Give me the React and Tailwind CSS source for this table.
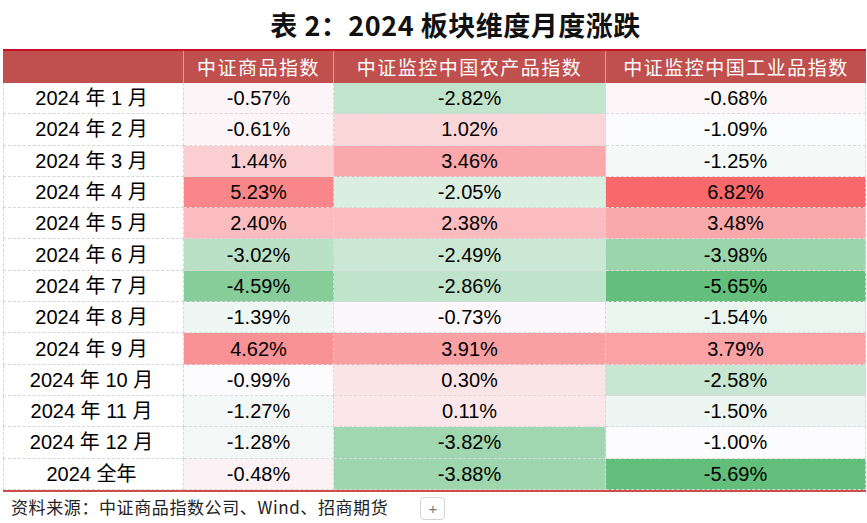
const rows = [
  ["2024 年 1 月", -0.57, -2.82, -0.68],
  ["2024 年 2 月", -0.61, 1.02, -1.09],
  ["2024 年 3 月", 1.44, 3.46, -1.25],
  ["2024 年 4 月", 5.23, -2.05, 6.82],
  ["2024 年 5 月", 2.4, 2.38, 3.48],
  ["2024 年 6 月", -3.02, -2.49, -3.98],
  ["2024 年 7 月", -4.59, -2.86, -5.65],
  ["2024 年 8 月", -1.39, -0.73, -1.54],
  ["2024 年 9 月", 4.62, 3.91, 3.79],
  ["2024 年 10 月", -0.99, 0.3, -2.58],
  ["2024 年 11 月", -1.27, 0.11, -1.5],
  ["2024 年 12 月", -1.28, -3.82, -1.0],
  ["2024 全年", -0.48, -3.88, -5.69],
];

// Excel 3-colour scale: min green, 50th percentile white, max red
const all = rows.flatMap((r) => r.slice(1)).sort((a, b) => a - b);
const min = all[0];
const max = all[all.length - 1];
const mid = all[Math.floor(all.length / 2)];
const green = [99, 190, 123];
const white = [252, 252, 255];
const red = [248, 105, 107];

function heat(v) {
  let from, to, t;
  if (v <= mid) {
    from = green;
    to = white;
    t = (v - min) / (mid - min);
  } else {
    from = white;
    to = red;
    t = (v - mid) / (max - mid);
  }
  const c = from.map((f, i) => Math.round(f + (to[i] - f) * t));
  return `rgb(${c[0]}, ${c[1]}, ${c[2]})`;
}

const cjk = "font-['Liberation_Sans','Noto_Sans_CJK_SC',sans-serif]";

export default function App() {
  return (
    <div className={`w-[867px] h-[523px] bg-white text-black ${cjk}`}>
      <div className="h-[49px] flex items-center justify-center pt-[2px] pl-[44px]">
        <h1 className="text-[27px] font-bold font-['Noto_Sans_CJK_SC',sans-serif] tracking-[0.5px] text-[#111]">
          表 2：2024 板块维度月度涨跌
        </h1>
      </div>

      <div className="ml-[3px] w-[863px] border-t-2 border-[#c8102e]">
        <div className="grid grid-cols-[181px_150px_272px_1fr] h-[32px] bg-[#c0504d] text-white text-[19px] tracking-[1.5px] font-['Noto_Sans_CJK_SC',sans-serif]">
          <div className="border-r border-[#d9d9d9]/60"></div>
          <div className="flex items-center justify-center border-r border-[#d9d9d9]/60">中证商品指数</div>
          <div className="flex items-center justify-center border-r border-[#d9d9d9]/60">中证监控中国农产品指数</div>
          <div className="flex items-center justify-center">中证监控中国工业品指数</div>
        </div>

        {rows.map(([label, a, b, c]) => (
          <div key={label} className="grid grid-cols-[181px_150px_272px_1fr] h-[31.3px] text-[20px]">
            <div className="flex items-center justify-center border-l border-r border-b border-dashed border-[#d6d6d6] pr-[4px]">
              {label}
            </div>
            {[a, b, c].map((v, i) => (
              <div
                key={i}
                className="flex items-center justify-center border-r border-b border-dashed border-[#dadada]"
                style={{ backgroundColor: heat(v) }}
              >
                {v.toFixed(2)}%
              </div>
            ))}
          </div>
        ))}
        <div className="h-[2px] bg-[#d24b4b]"></div>
      </div>

      <div className="flex items-center h-[30px] pl-[11px]">
        <span className="text-[17px] tracking-[0.6px] text-[#222] font-['Noto_Sans_CJK_SC',sans-serif]">
          资料来源：中证商品指数公司、Wind、招商期货
        </span>
        <button className="ml-[32px] mt-[4px] w-[25px] h-[23px] flex items-center justify-center rounded border border-[#d4d4d4] text-[#777] text-[15px] leading-none">
          +
        </button>
      </div>
    </div>
  );
}
